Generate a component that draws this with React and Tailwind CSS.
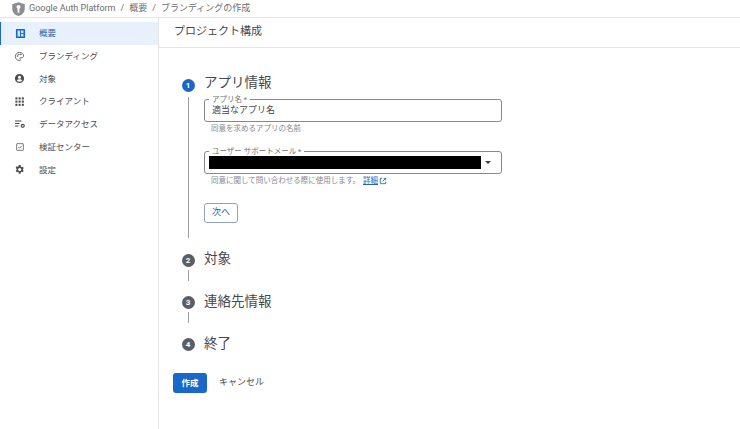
import React from 'react';

const FONT = 'font-["Roboto","Noto_Sans_CJK_JP",sans-serif]';

const icons = {
    dashboard: (
        <svg viewBox="0 0 24 24" className="w-[11px] h-[11px]" fill="none">
            <rect x="2" y="2" width="20" height="20" rx="2" fill="#1a66c9" />
            <rect x="5.5" y="5.5" width="5.5" height="13" fill="#d5e4f8" />
            <rect x="13" y="5.5" width="5.5" height="5.5" fill="#d5e4f8" />
            <rect x="13" y="13" width="5.5" height="5.5" fill="#d5e4f8" />
        </svg>
    ),
    palette: (
        <svg viewBox="0 0 24 24" className="w-[11px] h-[11px]" fill="none" stroke="#5f6368" strokeWidth="2">
            <path d="M12 3a9 9 0 1 0 0 18c1.6 0 2-1 2-2 0-1.4-1-1.8-1-3 0-1 .8-1.6 2-1.6h2.4c2 0 3.6-1.4 3.6-3.4C21 6.6 17 3 12 3z" />
            <circle cx="7.5" cy="11" r="1" fill="#5f6368" />
            <circle cx="10.5" cy="7.5" r="1" fill="#5f6368" />
            <circle cx="15" cy="7.5" r="1" fill="#5f6368" />
        </svg>
    ),
    person: (
        <svg viewBox="0 0 24 24" className="w-[11px] h-[11px]">
            <path fill="#4a4d52" fillRule="evenodd" d="M12 2a10 10 0 1 0 0 20 10 10 0 0 0 0-20zm0 4a3.4 3.4 0 1 1 0 6.8A3.4 3.4 0 0 1 12 6zm0 13.2a7.6 7.6 0 0 1-6-2.9c1.2-1.6 3.6-2.5 6-2.5s4.8.9 6 2.5a7.6 7.6 0 0 1-6 2.9z" />
        </svg>
    ),
    apps: (
        <svg viewBox="0 0 24 24" className="w-[11px] h-[11px]" fill="#4a4d52">
            {[3, 10, 17].map((y) => [3, 10, 17].map((x) => <rect key={`${x}-${y}`} x={x} y={y} width="4.5" height="4.5" />))}
        </svg>
    ),
    data: (
        <svg viewBox="0 0 24 24" className="w-[12px] h-[12px]" fill="none" stroke="#4a4d52" strokeWidth="2">
            <path d="M2 6h13M2 11h9M2 16h7" />
            <circle cx="17.5" cy="15.5" r="3" stroke="#4a4d52" strokeWidth="2.5" />
        </svg>
    ),
    check: (
        <svg viewBox="0 0 24 24" className="w-[10px] h-[10px]" fill="none" stroke="#5f6368" strokeWidth="2">
            <rect x="4" y="4" width="16" height="16" rx="1" />
            <path d="M8 12l3 3 5-6" />
        </svg>
    ),
    gear: (
        <svg viewBox="0 0 24 24" className="w-[11px] h-[11px]">
            <path fill="#4a4d52" fillRule="evenodd" d="M19.4 13c.1-.3.1-.7.1-1s0-.7-.1-1l2.1-1.6-2-3.5-2.5 1c-.5-.4-1.1-.8-1.7-1L14.4 2h-4l-.5 2.900c-.6.2-1.200.6-1.700 1l-2.500-1-2 3.500L5.800 11c-.1.3-.1.7-.1 1s0 .7.1 1l-2.100 1.600 2 3.500 2.500-1c.5.400 1.100.800 1.700 1l.5 2.900h4l.5-2.900c.6-.2 1.200-.6 1.700-1l2.500 1 2-3.500zM12.400 15.500a3.500 3.500 0 1 1 0-7 3.500 3.500 0 0 1 0 7z" />
        </svg>
    ),
};

const NAV = [
    { key: 'dashboard', label: '概要', active: true },
    { key: 'palette', label: 'ブランディング' },
    { key: 'person', label: '対象' },
    { key: 'apps', label: 'クライアント' },
    { key: 'data', label: 'データアクセス' },
    { key: 'check', label: '検証センター' },
    { key: 'gear', label: '設定' },
];

function Sidebar() {
    return (
        <aside className="w-[159px] shrink-0 border-r border-[#e3e5e8] pt-[4px]">
            {NAV.map((n) => (
                <div
                    key={n.key}
                    className={`h-[22.75px] flex items-center text-[8.5px] ${
                        n.active ? 'bg-[#e8f0fb] text-[#2a62ae] border-l border-[#1a66c9]' : 'text-[#4a4d52]'
                    }`}
                >
                    <span className={`shrink-0 flex justify-center ${n.active ? 'w-[38px]' : 'w-[39px]'}`}>{icons[n.key]}</span>
                    {n.label}
                </div>
            ))}
        </aside>
    );
}

function StepCircle({ n, active }) {
    return (
        <span
            className={`w-[13px] h-[13px] shrink-0 rounded-full flex items-center justify-center text-[8px] font-bold text-white ${
                active ? 'bg-[#1a66c9]' : 'bg-[#5b5e63]'
            }`}
        >
            {n}
        </span>
    );
}

function Step({ n, title, active, lineClass, circleClass, children }) {
    return (
        <div className="flex gap-[9px]">
            <div className={`w-[14px] flex flex-col items-center shrink-0 ${circleClass}`}>
                <StepCircle n={n} active={active} />
                {lineClass && <div className={`w-px bg-[#9a9ca0] ${lineClass}`} />}
            </div>
            <div className="flex-1">
                <div className="h-[20px] text-[13.5px] leading-[20px] text-[#45484c]">{title}</div>
                {children}
            </div>
        </div>
    );
}

function Outlined({ label, children }) {
    return (
        <div className="relative w-[298px] h-[23px] border border-[#85888d] rounded-[3px]">
            <span className="absolute -top-[5px] left-[4px] bg-white px-[3px] text-[7.5px] leading-[9px] text-[#6f7276]">{label}</span>
            {children}
        </div>
    );
}

export default function App() {
    return (
        <div className={`${FONT} w-[740px] h-[429px] bg-white overflow-hidden flex flex-col`}>
            <header className="h-[18px] shrink-0 border-b border-[#e3e5e8] flex items-center pl-[11px] gap-[3px] text-[#6b6e72]">
                <svg viewBox="0 0 24 24" className="w-[15px] h-[16px] shrink-0">
                    <path fill="#8a8d91" fillRule="evenodd" d="M12 1l10 3.500v7c0 5.500-4 10-10 11.500C6 21.500 2 17 2 11.500v-7zm0 4.500a3.300 3.300 0 0 0-1.500 6.200V18h3v-6.300A3.300 3.300 0 0 0 12 5.500z" />
                </svg>
                <span className="flex gap-[5px] text-[9px]">
                    <span>Google Auth Platform</span>
                    <span>/</span>
                    <span>概要</span>
                    <span>/</span>
                    <span>ブランディングの作成</span>
                </span>
            </header>

            <div className="flex flex-1">
                <Sidebar />
                <main className="flex-1">
                    <div className="h-[30px] border-b border-[#e3e5e8] pl-[15px] flex items-center text-[11px] text-[#45484c]">
                        プロジェクト構成
                    </div>
                    <div className="pl-[22px] pt-[24px] flex flex-col gap-[10px]">
                        <Step n={1} title="アプリ情報" active circleClass="pt-[7px]" lineClass="mt-[5px] h-[141px]">
                            <div className="pt-[7px]">
                                <Outlined label="アプリ名 *">
                                    <div className="pl-[7px] pt-[1px] h-full flex items-center text-[9px] text-[#45484c]">適当なアプリ名</div>
                                </Outlined>
                                <div className="pl-[7px] pt-[1px] text-[7.5px] leading-[11px] text-[#85888d]">同意を求めるアプリの名前</div>
                                <div className="mt-[17px]">
                                    <Outlined label="ユーザー サポートメール *">
                                        <div className="h-full flex items-center pl-[4px]">
                                            <div className="w-[272px] h-[13px] bg-black" />
                                            <span className="ml-[4px] w-0 h-0 border-x-[3.5px] border-x-transparent border-t-[3.5px] border-t-[#3c4043]" />
                                        </div>
                                    </Outlined>
                                </div>
                                <div className="pl-[7px] pt-[1px] text-[7.5px] leading-[11px] text-[#85888d] flex items-center">
                                    同意に関して問い合わせる際に使用します。
                                    <span className="ml-[3px] text-[#2a62ae] underline">詳細</span>
                                    <svg viewBox="0 0 24 24" className="w-[8px] h-[8px] ml-[1px]" fill="none" stroke="#2a62ae" strokeWidth="2.500">
                                        <path d="M10 4H4v16h16v-6M14 4h6v6M20 4l-9 9" />
                                    </svg>
                                </div>
                                <button className="mt-[17px] w-[34px] h-[20px] border border-[#8fa3b5] rounded-[3px] text-[9px] text-[#2a62ae] flex items-center justify-center">
                                    次へ
                                </button>
                            </div>
                        </Step>
                        <Step n={2} title="対象" circleClass="pt-[6px]" lineClass="mt-[3px] h-[11px]" />
                        <Step n={3} title="連絡先情報" circleClass="pt-[5px]" lineClass="mt-[3px] h-[11px]" />
                        <Step n={4} title="終了" circleClass="pt-[5px]" />
                    </div>
                    <div className="pl-[14px] mt-[20px] flex items-center">
                        <button className="w-[34px] h-[20px] rounded-[3px] bg-[#1a66c9] text-white text-[8.5px] font-bold flex items-center justify-center">
                            作成
                        </button>
                        <button className="ml-[12px] text-[9px] text-[#4a4d52]">キャンセル</button>
                    </div>
                </main>
            </div>
        </div>
    );
}
